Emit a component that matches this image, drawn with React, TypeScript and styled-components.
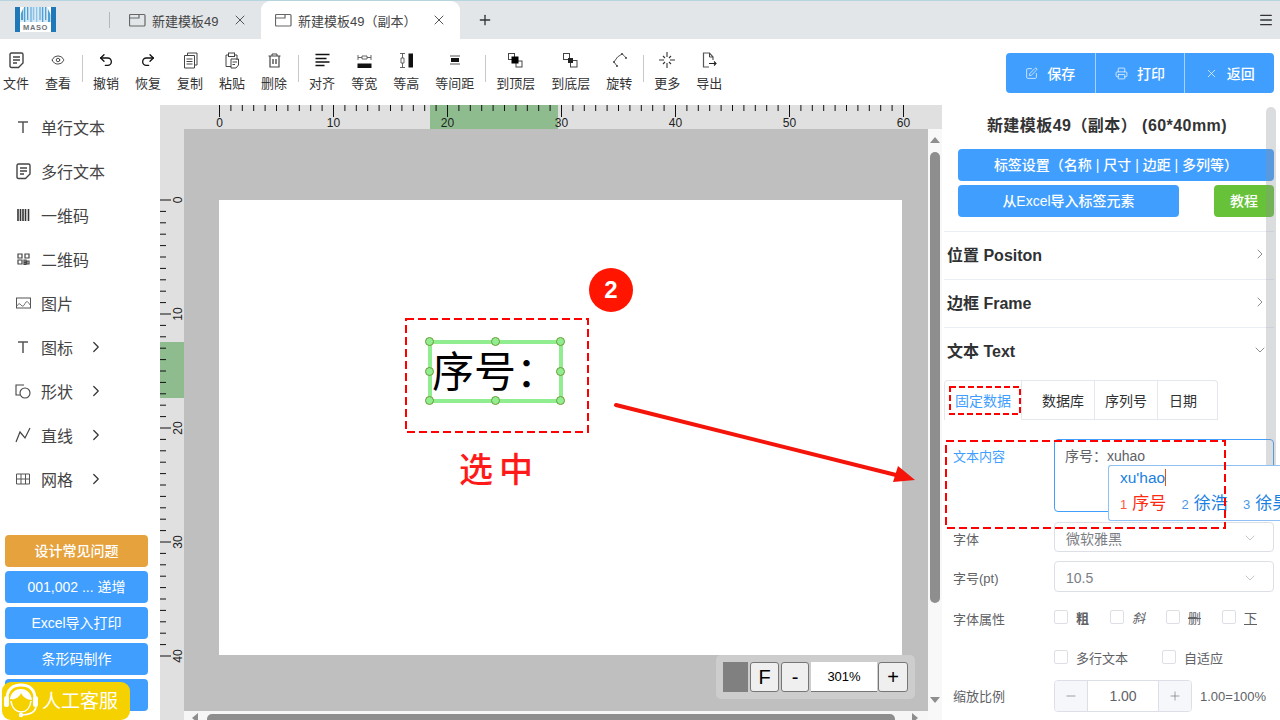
import styled, { createGlobalStyle, css } from 'styled-components';
import { ChevronDown, ChevronRight, Eye, Menu, Minus, Plus, Printer, Redo2, SquarePen, Undo2, X } from 'lucide-react';

const GlobalStyle = createGlobalStyle`
  html, body { margin: 0; padding: 0; background: #fff; }
  body {
    font-family: "Liberation Sans", "Noto Sans CJK SC", sans-serif;
    color: #333;
  }
  * { box-sizing: border-box; }
`;

const Root = styled.div`
  position: relative;
  width: 1280px;
  height: 720px;
  overflow: hidden;
  background: #fff;
`;

/* tab bar */
const TopBar = styled.div`
  display: flex;
  align-items: flex-end;
  height: 39px;
  background: #e3e6e9;
  border-top: 1px solid #b7d5df;
`;
const LogoBox = styled.div`
  width: 109px;
  height: 38px;
  padding: 6px 0 0 15px;
  flex-shrink: 0;
`;
const TabSep = styled.div`
  width: 1px;
  height: 16px;
  margin-bottom: 11px;
  background: #b4b8bc;
`;
const Tab = styled.div<{ $active?: boolean; $width: number }>`
  position: relative;
  display: flex;
  align-items: center;
  width: ${(p) => p.$width}px;
  height: 38px;
  padding-left: ${(p) => (p.$active ? 14 : 19)}px;
  font-size: 13px;
  color: #444;
  ${(p) =>
    p.$active &&
    css`
      background: #fff;
      border-radius: 9px 9px 0 0;
    `}
  svg.close { position: absolute; right: 13px; top: 11px; color: #555; }
`;
const TabText = styled.span`
  margin-left: 6px;
  white-space: nowrap;
`;
const AddTab = styled.div`
  display: flex;
  align-items: center;
  height: 38px;
  margin-left: 17px;
  color: #333;
`;
const MenuButton = styled.div`
  display: flex;
  align-items: center;
  height: 38px;
  margin-left: auto;
  padding-right: 6px;
  color: #333;
`;

/* toolbar */
const Toolbar = styled.div`
  display: flex;
  align-items: flex-start;
  gap: 16px;
  height: 66px;
  padding: 11px 6px 0 3px;
`;
const ToolItem = styled.div`
  display: flex;
  flex-direction: column;
  align-items: center;
  gap: 5px;
  font-size: 13px;
  line-height: 17px;
  color: #333;
  white-space: nowrap;
`;
const ToolIcon = styled.div`
  display: flex;
  align-items: center;
  justify-content: center;
  height: 20px;
`;
const ToolSep = styled.div`
  width: 1px;
  height: 27px;
  margin: 5px -6px 0 -5px;
  background: #c8c8c8;
`;
const ActionGroup = styled.div`
  display: flex;
  width: 268px;
  height: 40px;
  margin: 3px 0 0 auto;
  border-radius: 4px;
  overflow: hidden;
`;
const ActionButton = styled.div`
  display: flex;
  flex: 1;
  align-items: center;
  justify-content: center;
  gap: 9px;
  background: #409eff;
  color: #fff;
  font-size: 14px;
  font-weight: 500;
  & + & { border-left: 1px solid #a9d3ff; }
`;

/* main */
const Main = styled.div`
  display: flex;
  height: 615px;
`;
const Sidebar = styled.div`
  display: flex;
  flex-direction: column;
  width: 160px;
  flex-shrink: 0;
  padding: 0 12px 9px 5px;
`;
const NavItem = styled.div`
  display: flex;
  align-items: center;
  height: 44px;
  padding-left: 10px;
  font-size: 16px;
  color: #444;
`;
const NavIcon = styled.div`
  display: flex;
  align-items: center;
  justify-content: center;
  width: 16px;
  margin-right: 10px;
`;
const NavArrow = styled.div`
  display: flex;
  margin-left: 14px;
  color: #333;
`;
const HelpList = styled.div`
  display: flex;
  flex-direction: column;
  gap: 4px;
  margin-top: auto;
`;
const HelpButton = styled.div<{ $orange?: boolean }>`
  display: flex;
  align-items: center;
  justify-content: center;
  height: 32px;
  padding-bottom: 2px;
  border-radius: 4px;
  background: ${(p) => (p.$orange ? '#e6a23c' : '#409eff')};
  color: #fff;
  font-size: 14px;
  font-weight: ${(p) => (p.$orange ? 500 : 400)};
`;
const ServiceBadge = styled.div`
  position: absolute;
  left: 2px;
  top: 682px;
  display: flex;
  align-items: center;
  width: 128px;
  height: 38px;
  padding-bottom: 3px;
  border-radius: 9px;
  background: #f6d100;
  color: #fff;
  font-size: 19px;
`;

/* editor */
const Editor = styled.div`
  display: flex;
  flex-direction: column;
  width: 782px;
  flex-shrink: 0;
`;
const RulerSvg = styled.svg`
  display: block;
  flex-shrink: 0;
  background: #e0e0e0;
  font-family: "Liberation Sans", sans-serif;
`;
const EditorBody = styled.div`
  display: flex;
  flex: 1;
  min-height: 0;
`;
const Workspace = styled.div`
  display: flex;
  flex-direction: column;
  width: 744px;
`;
const Stage = styled.div`
  position: relative;
  flex: 1;
  padding: 71px 0 0 35px;
  background: #bfbfbf;
  overflow: hidden;
`;
const Sheet = styled.div`
  position: relative;
  width: 683px;
  height: 455px;
  background: #fff;
`;
const SelectedLabel = styled.div`
  position: absolute;
  left: 209px;
  top: 140px;
  width: 135px;
  height: 63px;
  border: 4px solid #90ee90;
  color: #000;
  font-size: 42px;
  line-height: 58px;
  white-space: nowrap;
`;
const Handle = styled.span<{ $x: number; $y: number }>`
  position: absolute;
  left: calc(${(p) => p.$x}% + ${(p) => (p.$x - 50) / 50 * 2 - 0.5}px);
  top: calc(${(p) => p.$y}% + ${(p) => (p.$y - 50) / 50 * 2 - 0.5}px);
  width: 9px;
  height: 9px;
  margin: -4.5px 0 0 -4.5px;
  border: 1px solid #6d9b35;
  border-radius: 50%;
  background: #90ee90;
`;
const ZoomBar = styled.div`
  position: absolute;
  right: 13px;
  bottom: 12px;
  display: flex;
  align-items: center;
  gap: 2px;
  width: 199px;
  height: 44px;
  padding-left: 7px;
  border-radius: 5px;
  background: #cdcdcd;
`;
const Swatch = styled.div`
  width: 25px;
  height: 30px;
  background: #808080;
`;
const ZoomBtn = styled.div<{ $width: number }>`
  display: flex;
  align-items: center;
  justify-content: center;
  width: ${(p) => p.$width}px;
  height: 30px;
  border: 1px solid #767676;
  border-radius: 3px;
  background: #efefef;
  color: #000;
  font-size: 20px;
`;
const ZoomValue = styled.div`
  display: flex;
  align-items: center;
  justify-content: center;
  width: 66px;
  height: 30px;
  margin-right: -1px;
  border-bottom: 1px solid #767676;
  background: #fff;
  color: #000;
  font-size: 13px;
`;
const HScroll = styled.div`
  display: flex;
  align-items: flex-end;
  height: 9px;
  padding-left: 8px;
  background: #f6f6f6;
  overflow: hidden;
`;
const HArrow = styled.span<{ $right?: boolean }>`
  width: 0;
  height: 0;
  border-top: 5px solid transparent;
  border-bottom: 5px solid transparent;
  ${(p) => (p.$right ? 'border-left: 6px solid #8e8e8e; margin: 0 0 -3px 17px;' : 'border-right: 6px solid #8e8e8e; margin: 0 9px -3px 0;')}
`;
const HThumb = styled.div`
  width: 688px;
  height: 6px;
  border-radius: 5px 5px 0 0;
  background: #8e8e8e;
`;
const VScroll = styled.div`
  display: flex;
  flex-direction: column;
  align-items: flex-start;
  width: 14px;
  padding: 8px 0 0 2px;
  background: #f8f8f8;
`;
const VArrow = styled.span<{ $down?: boolean }>`
  width: 0;
  height: 0;
  border-left: 5px solid transparent;
  border-right: 5px solid transparent;
  ${(p) => (p.$down ? 'border-top: 6px solid #8e8e8e; margin-top: 94px;' : 'border-bottom: 6px solid #8e8e8e; margin-bottom: 9px;')}
`;
const VThumb = styled.div`
  width: 10px;
  height: 451px;
  border-radius: 5px;
  background: #8e8e8e;
`;

/* right panel */
const Panel = styled.div`
  position: relative;
  display: flex;
  flex-direction: column;
  flex: 1;
  padding: 0 6px 0 2px;
  background: #fff;
`;
const PanelScroll = styled.div`
  position: absolute;
  right: 4px;
  top: 2px;
  width: 10px;
  height: 390px;
  border-radius: 5px;
  background: rgba(144, 147, 153, 0.32);
`;
const PanelTitle = styled.div`
  height: 44px;
  padding: 11px 4px 0 0;
  text-align: center;
  font-size: 16px;
  font-weight: 700;
  line-height: 20px;
  letter-spacing: 0.45px;
  white-space: pre;
  color: #333;
`;
const WideButton = styled.div`
  display: flex;
  align-items: center;
  justify-content: center;
  height: 32px;
  margin-left: 14px;
  padding-bottom: 2px;
  border-radius: 4px;
  background: #409eff;
  color: #fff;
  font-size: 14px;
  font-weight: 500;
`;
const ButtonRow = styled.div`
  display: flex;
  justify-content: space-between;
  margin: 4px 0 14px 14px;
`;
const ExcelButton = styled(WideButton)`
  width: 221px;
  margin-left: 0;
`;
const GuideButton = styled(WideButton)`
  width: 60px;
  margin-left: 0;
  background: #67c23a;
`;
const CollapseRow = styled.div`
  display: flex;
  align-items: center;
  justify-content: space-between;
  height: 48px;
  padding: 0 6px 3px 3px;
  border-top: 1px solid #ebeef5;
  font-size: 16px;
  font-weight: 700;
  color: #303133;
  svg { color: #555; }
`;
const TabStrip = styled.div`
  display: flex;
  width: 274px;
  height: 40px;
  margin-top: 5px;
  border: 1px solid #e4e7ed;
  border-bottom: 0;
  border-radius: 4px 4px 0 0;
`;
const DataTab = styled.div<{ $active?: boolean; $width: number; $pad: number; $last?: boolean }>`
  display: flex;
  align-items: center;
  width: ${(p) => p.$width}px;
  padding-left: ${(p) => p.$pad}px;
  border-bottom: 1px solid ${(p) => (p.$active ? 'transparent' : '#e4e7ed')};
  border-right: ${(p) => (p.$last ? '0' : '1px solid #e4e7ed')};
  font-size: 14px;
  white-space: nowrap;
  color: ${(p) => (p.$active ? '#409eff' : '#303133')};
`;
const FormRow = styled.div<{ $height: number; $top: number }>`
  display: grid;
  grid-template-columns: 110px 1fr;
  align-items: center;
  height: ${(p) => p.$height}px;
  margin-top: ${(p) => p.$top}px;
`;
const FormLabel = styled.div<{ $blue?: boolean; $alignTop?: boolean; $nudge?: number }>`
  padding: ${(p) => p.$nudge ?? 5}px 0 0 9px;
  font-size: 13px;
  line-height: 18px;
  color: ${(p) => (p.$blue ? '#409eff' : '#606266')};
  ${(p) => p.$alignTop && 'align-self: start; padding-top: 9px;'}
`;
const TextArea = styled.div`
  height: 100%;
  padding: 6px 10px;
  border: 1px solid #409eff;
  border-radius: 4px;
  font-size: 14px;
  line-height: 20px;
  color: #606266;
`;
const SelectBox = styled.div`
  display: flex;
  align-items: center;
  justify-content: space-between;
  height: 100%;
  padding: 2px 15px 0 11px;
  border: 1px solid #dcdfe6;
  border-radius: 4px;
  font-size: 14px;
  color: #7b7e84;
  svg { color: #a8acb4; }
`;
const Checks = styled.div`
  display: flex;
`;
const CheckItem = styled.div<{ $width: number }>`
  display: flex;
  align-items: center;
  gap: 8px;
  width: ${(p) => p.$width}px;
  font-size: 13px;
  color: #606266;
`;
const CheckBox = styled.span`
  width: 14px;
  height: 14px;
  flex-shrink: 0;
  border: 1px solid #dcdfe6;
  border-radius: 2px;
  background: #fff;
`;
const Styled = styled.span<{ $kind: 'bold' | 'italic' | 'strike' | 'under' }>`
  ${(p) => p.$kind === 'bold' && 'font-weight: 700;'}
  ${(p) => p.$kind === 'italic' && 'font-style: italic;'}
  ${(p) => p.$kind === 'strike' && 'text-decoration: line-through;'}
  ${(p) => p.$kind === 'under' && 'text-decoration: underline;'}
`;
const NumberRow = styled.div`
  display: flex;
  align-items: center;
  gap: 8px;
  font-size: 13px;
  color: #606266;
`;
const NumberBox = styled.div`
  display: flex;
  width: 138px;
  height: 32px;
  border: 1px solid #dcdfe6;
  border-radius: 4px;
  overflow: hidden;
  font-size: 14px;
`;
const StepBtn = styled.div<{ $right?: boolean }>`
  display: flex;
  align-items: center;
  justify-content: center;
  width: 33px;
  background: #f5f7fa;
  color: #606266;
  ${(p) => (p.$right ? 'border-left: 1px solid #dcdfe6;' : 'border-right: 1px solid #dcdfe6;')}
`;
const NumberValue = styled.div`
  display: flex;
  flex: 1;
  align-items: center;
  justify-content: center;
`;

/* input method popup */
const ImePopup = styled.div`
  position: absolute;
  left: 1108px;
  top: 465px;
  width: 172px;
  height: 56px;
  padding: 0 0 0 11px;
  border: 1px solid #8fc1f5;
  border-right: 0;
  border-radius: 3px 0 0 3px;
  background: #fff;
  color: #1a7fe0;
  font-size: 15.5px;
  overflow: hidden;
`;
const ImeCode = styled.div`
  height: 24px;
  line-height: 24px;
`;
const Caret = styled.span`
  display: inline-block;
  width: 1px;
  height: 17px;
  vertical-align: -3px;
  background: #e8501a;
`;
const ImeChoices = styled.div`
  display: flex;
  margin-top: 2px;
  line-height: 24px;
  white-space: nowrap;
`;
const ImeChoice = styled.div<{ $first?: boolean }>`
  display: flex;
  flex-shrink: 0;
  align-items: baseline;
  gap: 5px;
  width: 61.5px;
  font-size: 17px;
  color: ${(p) => (p.$first ? '#ff2a10' : '#1a7fe0')};
  small { font-size: 13px; opacity: 0.8; }
`;

/* annotations on top of the screenshot */
const Overlay = styled.svg`
  position: absolute;
  left: 0;
  top: 0;
  pointer-events: none;
`;
const StepBadge = styled.div`
  position: absolute;
  left: 589px;
  top: 268px;
  display: flex;
  align-items: center;
  justify-content: center;
  width: 44px;
  height: 44px;
  border-radius: 50%;
  background: #ff1500;
  color: #fff;
  font-size: 24px;
  font-weight: 700;
`;
const SelectedNote = styled.div`
  position: absolute;
  left: 459px;
  top: 446px;
  color: #ff1a1a;
  font-size: 34px;
  font-weight: 500;
  line-height: 48px;
  letter-spacing: 6px;
  white-space: nowrap;
`;

const Svg = ({ w = 16, h = 16, children }: { w?: number; h?: number; children: React.ReactNode }) => (
  <svg width={w} height={h} viewBox={`0 0 ${w} ${h}`} fill="none" stroke="currentColor" strokeWidth="1">
    {children}
  </svg>
);

const Logo = () => (
  <svg width="41" height="25" viewBox="0 0 41 25">
    <rect width="41" height="25" fill="#fff" />
    <rect width="5" height="25" fill="#1f78b8" />
    <rect x="36" width="5" height="25" fill="#1f78b8" />
    <rect x="5" width="31" height="16" fill="#d8eaf6" />
    {[6, 9, 12, 15, 18, 21, 24, 27, 30, 33].map((x, i) => (
      <rect key={x} x={x} y="0" width={i % 3 === 0 ? 2.2 : 1.3} height={i % 2 ? 15 : 13} fill={i > 2 && i < 7 ? '#8fc2e4' : '#4f9fd2'} />
    ))}
    <path d="M5 0L9 0L5 8ZM36 0L32 0L36 8Z" fill="#fff" />
    <rect x="5" y="15" width="31" height="10" fill="#fff" />
    <text x="20.5" y="23" fontSize="7.5" fontWeight="700" letterSpacing="0.6" textAnchor="middle" fill="#6f7479">MASO</text>
  </svg>
);

const TabGlyph = () => (
  <Svg w={17} h={14}>
    <rect x="0.5" y="1.5" width="15.5" height="11.5" rx="1" stroke="#666" strokeWidth="1.2" />
    <path d="M1 5H10V2" stroke="#666" strokeWidth="1.2" />
  </Svg>
);

const DocIcon = () => (
  <Svg w={15} h={17}>
    <path d="M2.5 1H12.5Q14 1 14 2.5V11L9.5 15.5H2.5Q1 15.5 1 14V2.5Q1 1 2.5 1Z" stroke="#444" strokeWidth="1.4" />
    <path d="M4 5H11M4 8H11M4 11H8" stroke="#444" strokeWidth="1.3" />
  </Svg>
);
const CopyIcon = () => (
  <Svg w={15} h={17}>
    <path d="M4.5 3V1H14V13H12" stroke="#444" />
    <path d="M1.5 3.5H11.5V16H1.5Z" stroke="#444" />
    <path d="M3.5 7H9.5M3.5 9.5H9.5M3.5 12H9.5" stroke="#444" />
  </Svg>
);
const PasteIcon = () => (
  <Svg w={16} h={17}>
    <path d="M4 3H2V14.5H7M11 3H13V8" stroke="#444" />
    <rect x="4.5" y="1" width="6" height="3.5" stroke="#444" />
    <path d="M7 7H14.5V13L12 16H7Z" stroke="#444" />
    <path d="M8.5 10H13M8.5 12.5H11" stroke="#444" />
  </Svg>
);
const BinIcon = () => (
  <Svg w={13} h={15}>
    <path d="M0.5 3H12.5M4 3V1H9V3" stroke="#444" />
    <path d="M2 3V14H11V3" stroke="#444" strokeWidth="1.2" />
    <path d="M5 6V11M8 6V11" stroke="#333" strokeWidth="1.2" />
  </Svg>
);
const AlignIcon = () => (
  <Svg w={15} h={14}>
    <path d="M0.5 1.5H14.5M0.5 5.5H11.5M0.5 9H14.5M0.5 12.5H9.5" stroke="#111" strokeWidth="1.4" />
  </Svg>
);
const SameWidthIcon = () => (
  <Svg w={15} h={15}>
    <path d="M1 2V7M14 2V7M1 4.5H5M10 4.5H14M5 3H10V6H5Z" stroke="#555" strokeWidth="0.9" />
    <rect x="0.5" y="10.5" width="14" height="4.5" fill="#111" stroke="none" />
  </Svg>
);
const SameHeightIcon = () => (
  <Svg w={15} h={15}>
    <path d="M1 0.5H6M1 14.5H6M3.5 0.5V5M3.5 10V14.5M2 5H5V10H2Z" stroke="#555" strokeWidth="0.9" />
    <rect x="9.5" y="0.5" width="4.5" height="14" fill="#111" stroke="none" />
  </Svg>
);
const SameGapIcon = () => (
  <Svg w={12} h={10}>
    <path d="M1 1H11M1 9H11" stroke="#aaa" strokeWidth="2" />
    <rect x="2" y="3" width="8" height="4" fill="#111" stroke="none" />
  </Svg>
);
const TopLayerIcon = () => (
  <Svg w={15} h={15}>
    <rect x="0.5" y="0.5" width="6" height="6" stroke="#444" />
    <rect x="8" y="8" width="6" height="6" stroke="#444" />
    <rect x="3.5" y="3.5" width="7" height="7" fill="#000" stroke="none" />
  </Svg>
);
const BottomLayerIcon = () => (
  <Svg w={15} h={15}>
    <rect x="0.5" y="0.5" width="6" height="6" stroke="#444" fill="#fff" />
    <rect x="7.5" y="7.5" width="6.5" height="6.5" stroke="#444" />
    <rect x="5" y="5" width="5" height="5" fill="#222" stroke="none" />
  </Svg>
);
const RotateIcon = () => (
  <Svg w={15} h={16}>
    <path d="M2 10Q5 4 10 2Q12 3 14 6M2 10L5 14" stroke="#555" />
    <circle cx="2" cy="10" r="1" fill="#444" stroke="none" />
    <circle cx="10" cy="2" r="1" fill="#444" stroke="none" />
    <circle cx="14" cy="6" r="1" fill="#444" stroke="none" />
    <circle cx="5" cy="14" r="1" fill="#444" stroke="none" />
  </Svg>
);
const MoreIcon = () => (
  <Svg w={16} h={16}>
    <path d="M8 0V5M8 11V16M0 8H5M11 8H16M4 4L6 6M10 10L12 12M12 4L10 6M6 10L4 12" stroke="#333" strokeWidth="1.1" />
  </Svg>
);
const ExportIcon = () => (
  <Svg w={15} h={17}>
    <path d="M11 8V5L7.5 1H1.5V15H7" stroke="#555" strokeWidth="1.2" />
    <path d="M7.5 1V5H11" stroke="#444" strokeWidth="1" />
    <path d="M7 11.5H14M12 9.5L14 11.5L12 13.5" stroke="#222" strokeWidth="1.1" />
  </Svg>
);

const TextIcon = () => (
  <Svg w={14} h={14}>
    <path d="M2 2H12M7 2V13" stroke="#555" strokeWidth="1.5" />
  </Svg>
);
const BarcodeIcon = () => (
  <Svg w={13} h={12}>
    <path d="M1 0V12M3.5 0V12M6 0V12M8.5 0V12M11.5 0V12" stroke="#333" strokeWidth="1.6" />
  </Svg>
);
const QrIcon = () => (
  <Svg w={13} h={12}>
    <path d="M1 1H5V5H1ZM8 1H12V5H8ZM1 7H5V11H1ZM7 7H9V9H7ZM10 8H12V11H10ZM7 10H9V11.5H7Z" stroke="#444" strokeWidth="1.2" />
  </Svg>
);
const ImageIcon = () => (
  <Svg w={15} h={12}>
    <rect x="0.5" y="1" width="14" height="10" stroke="#555" />
    <path d="M1 9Q3 5 5 8T9 6.5T14 8" stroke="#777" />
  </Svg>
);
const ShapeIcon = () => (
  <Svg w={16} h={15}>
    <path d="M9 1H1V11H5" stroke="#444" strokeWidth="1.1" />
    <circle cx="10" cy="9" r="5" stroke="#444" strokeWidth="1.1" />
  </Svg>
);
const LineIcon = () => (
  <Svg w={16} h={16}>
    <path d="M1 15L5 5L10 11L15 1" stroke="#444" strokeWidth="1.2" />
  </Svg>
);
const GridIcon = () => (
  <Svg w={14} h={12}>
    <path d="M0.5 1H13.5V11H0.5ZM0.5 6H13.5M5 1V11M9.5 1V11" stroke="#555" />
  </Svg>
);

const AgentIcon = () => (
  <svg width="40" height="38" viewBox="2 0 40 38" style={{ flexShrink: 0 }}>
    <path d="M7 18C7 8 13 4 21 4S35 8 35 18" fill="none" stroke="#fff" strokeWidth="3" />
    <rect x="4" y="15" width="5" height="11" rx="2.5" fill="#fff" />
    <rect x="33" y="15" width="5" height="11" rx="2.5" fill="#fff" />
    <path d="M10 18C11 11 16 8 21 8C27 8 31 12 32 19C27 19 23 16 21 12C19 17 14 19 10 18Z" fill="#fff" />
    <path d="M11 20C12 28 17 31 21 31C26 31 30 27 31 20" fill="none" stroke="#fff" strokeWidth="1.5" />
    <path d="M36 26C35 32 28 34 22 34" fill="none" stroke="#fff" strokeWidth="1.6" />
    <circle cx="21" cy="34" r="2.2" fill="#fff" />
  </svg>
);

const tools: ({ icon: React.ReactNode; label: string } | null)[] = [
  { icon: <DocIcon />, label: '文件' },
  { icon: <Eye size={14} strokeWidth={1.5} />, label: '查看' },
  null,
  { icon: <Undo2 size={16} strokeWidth={2} color="#111" />, label: '撤销' },
  { icon: <Redo2 size={16} strokeWidth={2} color="#111" />, label: '恢复' },
  { icon: <CopyIcon />, label: '复制' },
  { icon: <PasteIcon />, label: '粘贴' },
  { icon: <BinIcon />, label: '删除' },
  null,
  { icon: <AlignIcon />, label: '对齐' },
  { icon: <SameWidthIcon />, label: '等宽' },
  { icon: <SameHeightIcon />, label: '等高' },
  { icon: <SameGapIcon />, label: '等间距' },
  null,
  { icon: <TopLayerIcon />, label: '到顶层' },
  { icon: <BottomLayerIcon />, label: '到底层' },
  { icon: <RotateIcon />, label: '旋转' },
  null,
  { icon: <MoreIcon />, label: '更多' },
  { icon: <ExportIcon />, label: '导出' },
];

const navItems = [
  { icon: <TextIcon />, label: '单行文本' },
  { icon: <DocIcon />, label: '多行文本' },
  { icon: <BarcodeIcon />, label: '一维码' },
  { icon: <QrIcon />, label: '二维码' },
  { icon: <ImageIcon />, label: '图片' },
  { icon: <TextIcon />, label: '图标', more: true },
  { icon: <ShapeIcon />, label: '形状', more: true },
  { icon: <LineIcon />, label: '直线', more: true },
  { icon: <GridIcon />, label: '网格', more: true },
];

const helpButtons = ['设计常见问题', '001,002 ... 递增', 'Excel导入打印', '条形码制作', ''];

const MM = 11.4;

const TopRuler = () => (
  <RulerSvg width="782" height="24">
    <rect x="270" y="0" width="128" height="24" fill="#8fbc8f" />
    {Array.from({ length: 61 }, (_, i) => {
      const x = 59.5 + i * MM;
      const long = i % 10 === 0;
      return (
        <g key={i}>
          <line x1={x} x2={x} y1="0" y2={long ? 12 : 6} stroke="#111" />
          {long && <text x={x} y="22" fontSize="12" textAnchor="middle" fill="#222">{i}</text>}
        </g>
      );
    })}
  </RulerSvg>
);

const LeftRuler = () => (
  <RulerSvg width="24" height="591">
    <rect x="0" y="213" width="24" height="56" fill="#8fbc8f" />
    {Array.from({ length: 41 }, (_, i) => {
      const y = 71 + i * MM;
      const long = i % 10 === 0;
      return (
        <g key={i}>
          <line x1="0" x2={long ? 11 : 6} y1={y} y2={y} stroke="#111" />
          {long && (
            <text transform={`translate(22 ${y}) rotate(-90)`} fontSize="12" textAnchor="middle" fill="#222">{i}</text>
          )}
        </g>
      );
    })}
  </RulerSvg>
);

export default function App() {
  return (
    <Root>
      <GlobalStyle />
      <TopBar>
        <LogoBox><Logo /></LogoBox>
        <TabSep />
        <Tab $width={151}>
          <TabGlyph />
          <TabText>新建模板49</TabText>
          <X className="close" size={16} strokeWidth={1.5} />
        </Tab>
        <Tab $active $width={199}>
          <TabGlyph />
          <TabText>新建模板49（副本）</TabText>
          <X className="close" size={16} strokeWidth={1.5} />
        </Tab>
        <AddTab><Plus size={16} strokeWidth={2} /></AddTab>
        <MenuButton><Menu size={16} strokeWidth={2} /></MenuButton>
      </TopBar>

      <Toolbar>
        {tools.map((tool, i) =>
          tool ? (
            <ToolItem key={tool.label}>
              <ToolIcon>{tool.icon}</ToolIcon>
              {tool.label}
            </ToolItem>
          ) : (
            <ToolSep key={i} />
          ),
        )}
        <ActionGroup>
          <ActionButton><SquarePen size={13} strokeWidth={1.3} />保存</ActionButton>
          <ActionButton><Printer size={13} strokeWidth={1.3} />打印</ActionButton>
          <ActionButton><X size={13} strokeWidth={1.3} />返回</ActionButton>
        </ActionGroup>
      </Toolbar>

      <Main>
        <Sidebar>
          {navItems.map((item) => (
            <NavItem key={item.label}>
              <NavIcon>{item.icon}</NavIcon>
              {item.label}
              {item.more && <NavArrow><ChevronRight size={18} strokeWidth={1.6} /></NavArrow>}
            </NavItem>
          ))}
          <HelpList>
            {helpButtons.map((label, i) => (
              <HelpButton key={i} $orange={i === 0}>{label}</HelpButton>
            ))}
          </HelpList>
        </Sidebar>

        <Editor>
          <TopRuler />
          <EditorBody>
            <LeftRuler />
            <Workspace>
              <Stage>
                <Sheet>
                  <SelectedLabel>
                    序号：
                    <Handle $x={0} $y={0} />
                    <Handle $x={50} $y={0} />
                    <Handle $x={100} $y={0} />
                    <Handle $x={0} $y={50} />
                    <Handle $x={100} $y={50} />
                    <Handle $x={0} $y={100} />
                    <Handle $x={50} $y={100} />
                    <Handle $x={100} $y={100} />
                  </SelectedLabel>
                </Sheet>
                <ZoomBar>
                  <Swatch />
                  <ZoomBtn $width={29}>F</ZoomBtn>
                  <ZoomBtn $width={28}>-</ZoomBtn>
                  <ZoomValue>301%</ZoomValue>
                  <ZoomBtn $width={30}>+</ZoomBtn>
                </ZoomBar>
              </Stage>
              <HScroll>
                <HArrow />
                <HThumb />
                <HArrow $right />
              </HScroll>
            </Workspace>
            <VScroll>
              <VArrow />
              <VThumb />
              <VArrow $down />
            </VScroll>
          </EditorBody>
        </Editor>

        <Panel>
          <PanelTitle>新建模板49（副本） (60*40mm)</PanelTitle>
          <WideButton>标签设置（名称 | 尺寸 | 边距 | 多列等）</WideButton>
          <ButtonRow>
            <ExcelButton>从Excel导入标签元素</ExcelButton>
            <GuideButton>教程</GuideButton>
          </ButtonRow>
          <CollapseRow>位置 Positon<ChevronRight size={16} strokeWidth={1} /></CollapseRow>
          <CollapseRow>边框 Frame<ChevronRight size={16} strokeWidth={1} /></CollapseRow>
          <CollapseRow>文本 Text<ChevronDown size={16} strokeWidth={1} /></CollapseRow>
          <TabStrip>
            <DataTab $active $width={77} $pad={10}>固定数据</DataTab>
            <DataTab $width={73} $pad={20}>数据库</DataTab>
            <DataTab $width={63} $pad={10}>序列号</DataTab>
            <DataTab $width={59} $pad={11} $last>日期</DataTab>
          </TabStrip>
          <FormRow $height={73} $top={19}>
            <FormLabel $blue $alignTop>文本内容</FormLabel>
            <TextArea>序号：xuhao</TextArea>
          </FormRow>
          <FormRow $height={30} $top={10}>
            <FormLabel>字体</FormLabel>
            <SelectBox>微软雅黑<ChevronDown size={16} strokeWidth={1} /></SelectBox>
          </FormRow>
          <FormRow $height={31} $top={9}>
            <FormLabel>字号(pt)</FormLabel>
            <SelectBox>10.5<ChevronDown size={16} strokeWidth={1} /></SelectBox>
          </FormRow>
          <FormRow $height={32} $top={9}>
            <FormLabel>字体属性</FormLabel>
            <Checks>
              <CheckItem $width={56}><CheckBox /><Styled $kind="bold">粗</Styled></CheckItem>
              <CheckItem $width={56}><CheckBox /><Styled $kind="italic">斜</Styled></CheckItem>
              <CheckItem $width={56}><CheckBox /><Styled $kind="strike">删</Styled></CheckItem>
              <CheckItem $width={52}><CheckBox /><Styled $kind="under">下</Styled></CheckItem>
            </Checks>
          </FormRow>
          <FormRow $height={32} $top={8}>
            <div />
            <Checks>
              <CheckItem $width={108}><CheckBox />多行文本</CheckItem>
              <CheckItem $width={100}><CheckBox />自适应</CheckItem>
            </Checks>
          </FormRow>
          <FormRow $height={32} $top={7}>
            <FormLabel $nudge={2}>缩放比例</FormLabel>
            <NumberRow>
              <NumberBox>
                <StepBtn><Minus size={14} strokeWidth={1} /></StepBtn>
                <NumberValue>1.00</NumberValue>
                <StepBtn $right><Plus size={14} strokeWidth={1} /></StepBtn>
              </NumberBox>
              1.00=100%
            </NumberRow>
          </FormRow>
          <PanelScroll />
        </Panel>
      </Main>

      <ServiceBadge><AgentIcon />人工客服</ServiceBadge>

      <Overlay width="1280" height="720" viewBox="0 0 1280 720" fill="none">
        <rect x="406" y="319" width="182" height="113" stroke="#f00" strokeWidth="2" strokeDasharray="8 4" />
        <rect x="950" y="387" width="70" height="27" stroke="#f00" strokeWidth="2" strokeDasharray="6 3" />
        <path d="M616 405L896 475" stroke="#f5140a" strokeWidth="4" strokeLinecap="round" />
        <path d="M915 480L893 482L898 466Z" fill="#f5140a" />
      </Overlay>

      <ImePopup>
        <ImeCode>xu'hao<Caret /></ImeCode>
        <ImeChoices>
          <ImeChoice $first><small>1</small>序号</ImeChoice>
          <ImeChoice><small>2</small>徐浩</ImeChoice>
          <ImeChoice><small>3</small>徐昊</ImeChoice>
        </ImeChoices>
      </ImePopup>

      <Overlay width="1280" height="720" viewBox="0 0 1280 720" fill="none">
        <rect x="946" y="441" width="279" height="87" stroke="#f00" strokeWidth="2" strokeDasharray="8 4" />
      </Overlay>

      <StepBadge>2</StepBadge>
      <SelectedNote>选中</SelectedNote>
    </Root>
  );
}
